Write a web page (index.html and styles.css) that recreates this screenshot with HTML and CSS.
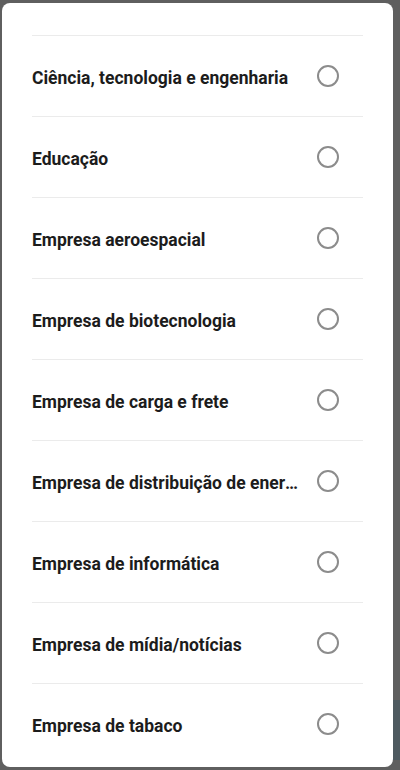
FILE: index.html
```html
<!DOCTYPE html>
<html lang="pt">
<head>
  <meta charset="UTF-8" />
  <meta name="viewport" content="width=device-width, initial-scale=1.0" />
  <title>Setor</title>
  <link rel="stylesheet" href="styles.css">
</head>
<body>
  <div class="backdrop">
    <div class="dialog">
      <ul class="options">
        <li class="option"><span class="label">Ciência, tecnologia e engenharia</span><span class="radio"></span></li>
        <li class="option"><span class="label">Educação</span><span class="radio"></span></li>
        <li class="option"><span class="label">Empresa aeroespacial</span><span class="radio"></span></li>
        <li class="option"><span class="label">Empresa de biotecnologia</span><span class="radio"></span></li>
        <li class="option"><span class="label">Empresa de carga e frete</span><span class="radio"></span></li>
        <li class="option"><span class="label">Empresa de distribuição de energia</span><span class="radio"></span></li>
        <li class="option"><span class="label">Empresa de informática</span><span class="radio"></span></li>
        <li class="option"><span class="label">Empresa de mídia/notícias</span><span class="radio"></span></li>
        <li class="option"><span class="label">Empresa de tabaco</span><span class="radio"></span></li>
      </ul>
    </div>
  </div>
</body>
</html>
```

FILE: styles.css
```css
html, body {
  margin: 0;
  height: 100%;
}
body {
  background: #5f5f5f;
  font-family: Roboto, "Noto Sans", sans-serif;
  overflow: hidden;
}
.backdrop {
  height: 770px;
  padding: 3px 7px 3px 2px;
  box-sizing: border-box;
  background: linear-gradient(to bottom, transparent 700px, #4e5a60 700px, #4e5a60 760px, transparent 760px) right / 7px 100% no-repeat;
}
.dialog {
  height: 764px;
  background: #ffffff;
  border-radius: 8px;
  overflow: hidden;
}
.options {
  list-style: none;
  margin: 0;
  padding: 32px 30px 0 30px;
}
.option {
  display: flex;
  align-items: center;
  height: 80px;
  border-top: 1px solid #ebebeb;
  padding: 0 24px 0 0;
  gap: 18px;
}
.label {
  flex: 1;
  min-width: 0;
  white-space: nowrap;
  overflow: hidden;
  text-overflow: ellipsis;
  font-size: 17.5px;
  font-weight: 700;
  color: #1c1c1c;
  padding-top: 3px;
}
.radio {
  flex: none;
  width: 18px;
  height: 18px;
  border: 2px solid #8c8c8c;
  border-radius: 50%;
  margin-top: -1px;
}
```
